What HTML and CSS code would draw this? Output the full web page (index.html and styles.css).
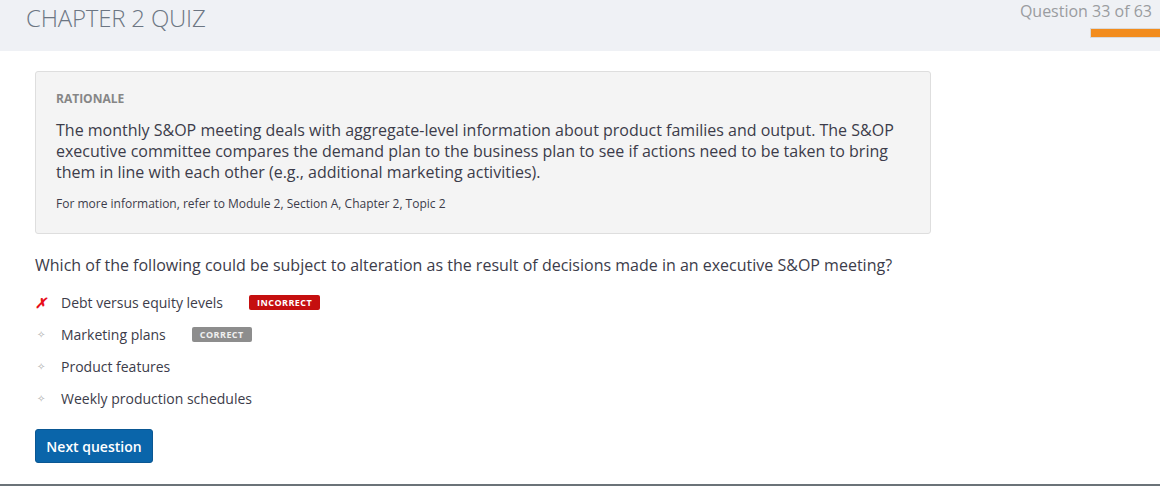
FILE: index.html
```html
<!DOCTYPE html>
<html>
<head>
<meta charset="utf-8">
<link rel="stylesheet" href="styles.css">
</head>
<body>
<header class="top">
  <h1 class="title">CHAPTER 2 QUIZ</h1>
  <div class="progress">
    <div class="count">Question 33 of 63</div>
    <div class="bar"></div>
  </div>
</header>
<main class="content">
  <section class="rationale">
    <h2 class="label">RATIONALE</h2>
    <p class="body">The monthly S&amp;OP meeting deals with aggregate-level information about product families and output. The S&amp;OP executive committee compares the demand plan to the business plan to see if actions need to be taken to bring them in line with each other (e.g., additional marketing activities).</p>
    <p class="ref">For more information, refer to Module 2, Section A, Chapter 2, Topic 2</p>
  </section>
  <p class="question">Which of the following could be subject to alteration as the result of decisions made in an executive S&amp;OP meeting?</p>
  <ul class="options">
    <li class="opt"><span class="mark x">&#x2717;</span><span class="txt">Debt versus equity levels</span><span class="badge bad">INCORRECT</span></li>
    <li class="opt"><span class="mark dot">&#x2727;</span><span class="txt">Marketing plans</span><span class="badge good">CORRECT</span></li>
    <li class="opt"><span class="mark dot">&#x2727;</span><span class="txt">Product features</span></li>
    <li class="opt"><span class="mark dot">&#x2727;</span><span class="txt">Weekly production schedules</span></li>
  </ul>
  <button class="next">Next question</button>
</main>
<div class="bottom"></div>
</body>
</html>
```
FILE: styles.css
```css
html, body { margin: 0; padding: 0; }
body {
  width: 1160px;
  height: 486px;
  position: relative;
  font-family: "Open Sans", "Liberation Sans", sans-serif;
  color: #3c3c4a;
  background: #fff;
  overflow: hidden;
}
.top {
  height: 51px;
  background: #eff1f5;
  display: flex;
  justify-content: space-between;
  align-items: flex-start;
}
.title {
  margin: 3px 0 0 26px;
  font-size: 24px;
  font-weight: 300;
  color: #6c7683;
  line-height: 30px;
  letter-spacing: -0.2px;
}
.progress {
  display: flex;
  flex-direction: column;
  align-items: flex-end;
}
.count {
  margin: 0 8px 0 0;
  font-size: 16px;
  line-height: 22px;
  color: #9a9ca0;
}
.bar {
  margin-top: 6px;
  width: 69px;
  height: 8px;
  background: #f28c1d;
  border: 1px solid #d9d9d9;
  border-right: 0;
  border-radius: 1px 0 0 1px;
}
.content {
  padding: 20px 0 0 35px;
}
.rationale {
  width: 854px;
  height: 123px;
  background: #f4f4f4;
  border: 1px solid #dedede;
  border-radius: 3px;
  padding: 18px 20px 20px 20px;
}
.label {
  margin: 0;
  font-size: 12px;
  font-weight: 700;
  color: #868686;
  line-height: 17px;
}
.body {
  margin: 13px 0 0 0;
  font-size: 16px;
  line-height: 21px;
  color: #3c3c4a;
}
.ref {
  margin: 13px 0 0 0;
  font-size: 12px;
  line-height: 16px;
  color: #3c3c4a;
}
.question {
  margin: 20px 0 0 0;
  font-size: 16px;
  line-height: 22px;
}
.options {
  list-style: none;
  margin: 10px 0 0 0;
  padding: 0;
}
.opt {
  display: flex;
  align-items: center;
  height: 32px;
}
.mark {
  width: 26px;
  display: inline-flex;
  justify-content: flex-start;
}
.x {
  color: #e8101a;
  font-size: 14px;
  font-weight: 700;
  font-style: italic;
}
.dot {
  color: #b0b0b0;
  font-size: 10px;
  padding-left: 2px;
  width: 24px;
}
.txt {
  font-size: 14px;
  color: #3c3c4a;
}
.badge {
  margin-left: 26px;
  font-size: 9px;
  font-weight: 700;
  letter-spacing: 0.45px;
  color: #fff;
  padding: 0 8px;
  height: 15px;
  line-height: 15px;
  border-radius: 2px;
}
.bad { background: #c50f0f; }
.good { background: #8d8d8d; color: #f0f0f0; }
.next {
  margin-top: 15px;
  width: 118px;
  height: 34px;
  background: #0a65aa;
  color: #fff;
  border: 1px solid #0a5793;
  border-radius: 3px;
  font-family: "Open Sans", "Liberation Sans", sans-serif;
  font-size: 14px;
  font-weight: 600;
  padding: 0;
}
.bottom {
  position: absolute;
  left: 0;
  right: 0;
  bottom: 0;
  height: 2px;
  background: #6b7378;
}
```
